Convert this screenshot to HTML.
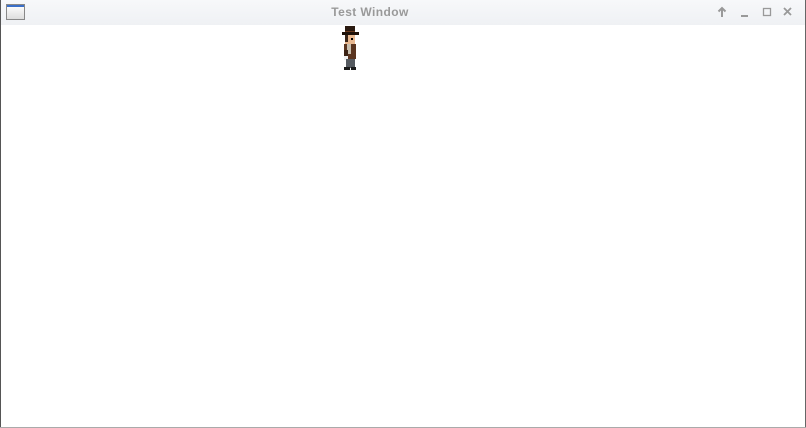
<!DOCTYPE html>
<html><head><style>
body{margin:0;width:806px;height:428px;background:#fff;position:relative;overflow:hidden;font-family:"Liberation Sans",sans-serif}
.tb{position:absolute;left:0;top:0;width:806px;height:25px;background:linear-gradient(#f7f8fa,#eff1f4);}
.bl{position:absolute;left:0;top:0;width:1px;height:428px;background:#555}
.br{position:absolute;right:0;top:0;width:1px;height:428px;background:#666}
.bb{position:absolute;left:0;bottom:0;width:806px;height:1px;background:#aaa}
.t{position:absolute;left:0;width:740px;text-align:center;top:5px;font-size:12px;font-weight:bold;color:#999;letter-spacing:.4px}
.ic{position:absolute;left:6px;top:4px;width:19px;height:16px;border:1px solid #888;background:linear-gradient(#fff,#ddd);box-sizing:border-box}
.ic:before{content:"";position:absolute;left:0;top:0;right:0;height:2px;background:#3a6fc8}
.p{position:absolute}
</style></head><body>
<div class="tb"></div>
<div class="ic"></div>
<div class="t">Test Window</div>
<svg class="p" style="left:715px;top:5px" width="85" height="14" viewBox="0 0 85 14">
<path d="M7 12V3M3.5 6.5L7 3l3.5 3.5" stroke="#999" stroke-width="2" fill="none"/>
<rect x="26" y="10" width="7" height="2" fill="#999"/>
<rect x="48.5" y="3.5" width="7" height="7" stroke="#999" stroke-width="1.3" fill="none"/>
<path d="M69 3l7 7M76 3l-7 7" stroke="#999" stroke-width="1.8"/>
</svg>
<svg class="p" style="left:340px;top:25px" width="22" height="47" viewBox="0 0 22 47">
<rect x="5" y="1" width="10" height="7" fill="#2a1a10"/>
<rect x="2" y="7" width="17" height="3" fill="#1e120a"/>
<rect x="5" y="6" width="10" height="1" fill="#6b3a1f"/>
<rect x="5" y="10" width="10" height="9" fill="#e8b890"/>
<rect x="5" y="10" width="3" height="7" fill="#3a2518"/>
<rect x="11" y="13" width="2" height="2" fill="#000"/>
<rect x="4" y="19" width="12" height="15" fill="#5a3520"/>
<rect x="7" y="19" width="4" height="10" fill="#c9c0b0"/>
<rect x="4" y="25" width="4" height="9" fill="#3b2214"/>
<rect x="4" y="31" width="4" height="4" fill="#eee"/>
<rect x="6" y="34" width="9" height="9" fill="#555a60"/>
<rect x="4" y="42" width="6" height="3" fill="#1a1a1a"/>
<rect x="11" y="42" width="5" height="3" fill="#1a1a1a"/>
</svg>
<div class="bl"></div><div class="br"></div><div class="bb"></div>
</body></html>
